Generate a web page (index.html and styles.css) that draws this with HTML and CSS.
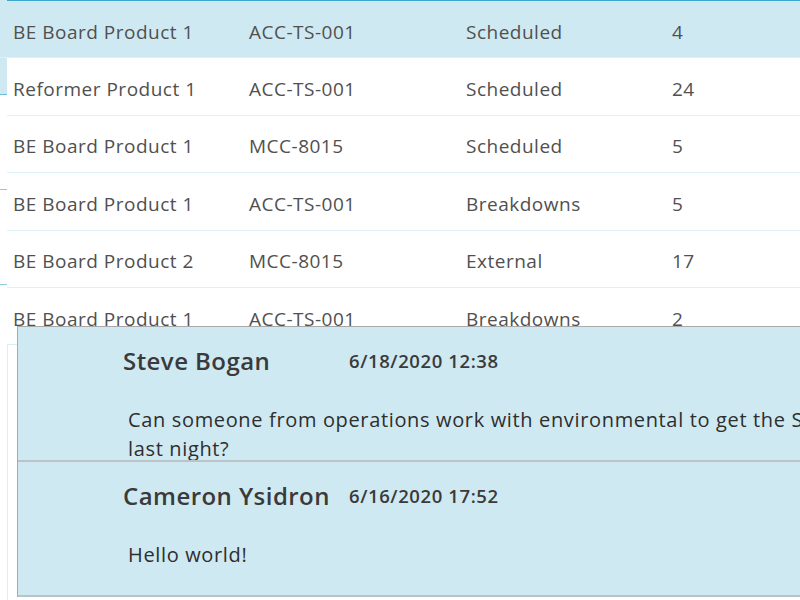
FILE: index.html
```html
<!DOCTYPE html>
<html lang="en">
<head>
  <meta charset="UTF-8" />
  <meta name="viewport" content="width=device-width, initial-scale=1.0"/>
  <title>Work Orders</title>
  <link rel="stylesheet" href="styles.css">
</head>
<body>

  <div class="stage">

    <!-- list panel sitting behind the grid -->
    <ul class="side-list">
      <li class="side-item selected"></li>
      <li class="side-item"></li>
      <li class="side-item"></li>
    </ul>

    <div class="orders">
      <div class="row selected">
        <span>BE Board Product 1</span><span>ACC-TS-001</span><span>Scheduled</span><span>4</span>
      </div>
      <div class="row">
        <span>Reformer Product 1</span><span>ACC-TS-001</span><span>Scheduled</span><span>24</span>
      </div>
      <div class="row">
        <span>BE Board Product 1</span><span>MCC-8015</span><span>Scheduled</span><span>5</span>
      </div>
      <div class="row">
        <span>BE Board Product 1</span><span>ACC-TS-001</span><span>Breakdowns</span><span>5</span>
      </div>
      <div class="row">
        <span>BE Board Product 2</span><span>MCC-8015</span><span>External</span><span>17</span>
      </div>
      <div class="row">
        <span>BE Board Product 1</span><span>ACC-TS-001</span><span>Breakdowns</span><span>2</span>
      </div>
      <div class="details"></div>
    </div>

    <!-- comments flyout -->
    <div class="comments">
      <div class="comment">
        <div class="comment-head">
          <span class="author">Steve Bogan</span>
          <span class="stamp">6/18/2020 12:38</span>
        </div>
        <p class="message">Can someone from operations work with environmental to get the Spill report filed from<br>last night?</p>
      </div>
      <div class="comment">
        <div class="comment-head">
          <span class="author">Cameron Ysidron</span>
          <span class="stamp">6/16/2020 17:52</span>
        </div>
        <p class="message">Hello world!</p>
      </div>
    </div>

  </div>

</body>
</html>
```

FILE: styles.css
```css
html, body {
  margin: 0;
  height: 100%;
  overflow: hidden;
  background: #fff;
}
body {
  font-family: "Open Sans", "Noto Sans", Arial, sans-serif;
  color: #444;
}
.stage {
  display: grid;
  width: 800px;
  height: 600px;
  overflow: hidden;
}
.stage > * {
  grid-area: 1 / 1;
}

/* list behind */
.side-list {
  list-style: none;
  margin: 0;
  padding: 0;
}
.side-item {
  height: 94px;
  border-bottom: 1.5px solid #8fcbe0;
}
.side-item.selected {
  background: #cfe9f2;
  border-bottom-color: #6fbcd8;
}

/* grid of orders */
.orders {
  margin-left: 7px;
  background: #fff;
  border-top: 1px solid #3ca7cf;
  align-self: start;
}
.row {
  display: grid;
  grid-template-columns: 236px 217px 206px 1fr;
  align-items: center;
  height: 51.4px;
  padding: 5px 0 0 6px;
  border-bottom: 1px solid #dff0f7;
  font-size: 19px;
  letter-spacing: 0.5px;
  white-space: nowrap;
  color: #505050;
}
.row.selected {
  background: #cfe9f2;
  margin-left: -7px;
  padding-left: 13px;
}
.details {
  margin-top: -1px;
  height: 300px;
  border-top: 1px solid #dcedf4;
  border-left: 1px solid #dcedf4;
}

/* comments flyout */
.comments {
  margin: 326px 0 0 17px;
  width: 1000px;
  align-self: start;
  background: #cfe9f2;
  border-top: 1px solid #a9a9a9;
  border-left: 1px solid #a9a9a9;
}
.comment {
  height: 133px;
  overflow: hidden;
  border-bottom: 2px solid #bcc3c6;
}
.comment-head {
  display: grid;
  grid-template-columns: 226px auto;
  align-items: center;
  padding: 17px 0 0 105px;
  height: 32px;
}
.author {
  font-size: 24px;
  font-weight: 600;
  letter-spacing: 0.45px;
  white-space: nowrap;
  color: #3a3a3a;
}
.stamp {
  font-size: 18.5px;
  font-weight: 600;
  letter-spacing: 0.6px;
  color: #3a3a3a;
}
.message {
  margin: 29px 0 0 110px;
  font-size: 20px;
  line-height: 29px;
  letter-spacing: 0.65px;
  white-space: nowrap;
  color: #2e2e2e;
}
```
